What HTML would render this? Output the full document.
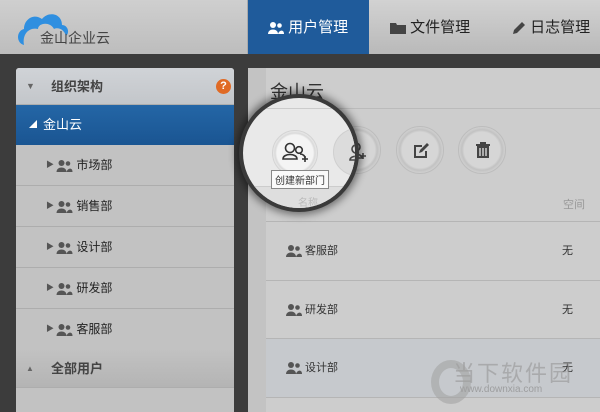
<!DOCTYPE html>
<html><head><meta charset="utf-8"><style>
*{margin:0;padding:0;box-sizing:border-box}
body{width:600px;height:412px;overflow:hidden;background:#3c3c3c;font-family:"Liberation Sans","Noto Sans CJK SC",sans-serif;position:relative}
.a{position:absolute}
.hdr{left:0;top:0;width:600px;height:54px;background:linear-gradient(#d2d2d2,#b9b9b9)}
.logo{left:0;top:0;width:248px;height:54px;background:linear-gradient(#cfcfcf,#bdbdbd);border-right:1px solid #aaa}
.tab{top:0;height:54px;line-height:56px;font-size:15px;color:#222}
.side{left:16px;top:68px;width:218px;height:344px;background:#c2c2c2;border-radius:3px 3px 0 0;overflow:hidden}
.row{position:absolute;left:0;width:218px;height:41px;border-bottom:1px solid #adadad;font-size:12px;color:#222;line-height:40px}
.ic{display:inline-block;vertical-align:middle}
.main{left:248px;top:68px;width:352px;height:344px;background:#cdcdcd;border-radius:3px 0 0 0}
.btn{width:48px;height:48px;border-radius:50%;background:radial-gradient(#d6d6d6 55%,#c2c2c2 62%,#cfcfcf 70%);border:1px solid #bdbdbd}
.tr{position:absolute;left:18px;width:334px;border-bottom:1px solid #b5b5b5;font-size:11px;color:#333}
</style></head><body>
<div class="a hdr"></div>
<div class="a logo">
<svg class="a" style="left:14px;top:7px" width="56" height="40" viewBox="0 0 56 40"><path d="M10 38 C2 36 2 24 10 22 C10 12 20 6 28 12 C34 4 48 6 48 18 C54 18 56 26 52 29 C50 22 44 20 40 22 C36 14 24 16 24 22 C16 20 8 26 10 38 Z" fill="#2f8fe0"/></svg>
<div class="a" style="left:40px;top:28px;font-size:14px;color:#444">金山企业云</div>
</div>
<div class="a tab" style="left:248px;width:121px;background:#1f5b9b;color:#fff;padding-left:20px">
<svg class="ic" width="16" height="12" viewBox="0 0 16 12"><circle cx="5" cy="3" r="3" fill="#fff"/><path d="M0 12 C0 6 10 6 10 12Z" fill="#fff"/><circle cx="11.5" cy="3.5" r="2.3" fill="#fff"/><path d="M10 12 C11 8 16 7 16 12Z" fill="#fff"/></svg> 用户管理</div>
<div class="a tab" style="left:390px"><svg class="ic" width="16" height="12"><path d="M0 1h6l1 2h9v9H0z" fill="#444"/></svg> 文件管理</div>
<div class="a tab" style="left:512px"><svg class="ic" width="14" height="14" viewBox="0 0 14 14"><path d="M1 13l1-4 8-8 3 3-8 8z" fill="#444"/></svg> 日志管理</div>

<div class="a side">
<div class="row" style="top:0;height:37px;background:linear-gradient(#d0d3d7,#c3c6ca);font-size:13px;line-height:37px;color:#444;font-weight:bold"><span style="position:absolute;left:10px;font-size:9px;color:#666">▼</span><span style="position:absolute;left:35px">组织架构</span><span style="position:absolute;left:200px;top:11px;width:15px;height:15px;border-radius:50%;background:#e06a25;color:#fff;font-size:11px;line-height:15px;text-align:center">?</span></div>
<div class="row" style="top:37px;height:40px;background:linear-gradient(#2466a6,#1a5592);color:#fff;border:0;font-size:13px"><span style="position:absolute;left:13px;font-size:8px">◢</span><span style="position:absolute;left:27px">金山云</span></div>
<div class="row" style="top:77px"><span style="position:absolute;left:30px;font-size:8px;color:#555">▶</span><span style="position:absolute;left:40px"><svg class="ic" width="17" height="12" viewBox="0 0 16 12"><circle cx="5" cy="3" r="3" fill="#555"/><path d="M0 12 C0 6 10 6 10 12Z" fill="#555"/><circle cx="11.5" cy="3.5" r="2.3" fill="#555"/><path d="M10 12 C11 8 16 7 16 12Z" fill="#555"/></svg> 市场部</span></div>
<div class="row" style="top:118px"><span style="position:absolute;left:30px;font-size:8px;color:#555">▶</span><span style="position:absolute;left:40px"><svg class="ic" width="17" height="12" viewBox="0 0 16 12"><circle cx="5" cy="3" r="3" fill="#555"/><path d="M0 12 C0 6 10 6 10 12Z" fill="#555"/><circle cx="11.5" cy="3.5" r="2.3" fill="#555"/><path d="M10 12 C11 8 16 7 16 12Z" fill="#555"/></svg> 销售部</span></div>
<div class="row" style="top:159px"><span style="position:absolute;left:30px;font-size:8px;color:#555">▶</span><span style="position:absolute;left:40px"><svg class="ic" width="17" height="12" viewBox="0 0 16 12"><circle cx="5" cy="3" r="3" fill="#555"/><path d="M0 12 C0 6 10 6 10 12Z" fill="#555"/><circle cx="11.5" cy="3.5" r="2.3" fill="#555"/><path d="M10 12 C11 8 16 7 16 12Z" fill="#555"/></svg> 设计部</span></div>
<div class="row" style="top:200px"><span style="position:absolute;left:30px;font-size:8px;color:#555">▶</span><span style="position:absolute;left:40px"><svg class="ic" width="17" height="12" viewBox="0 0 16 12"><circle cx="5" cy="3" r="3" fill="#555"/><path d="M0 12 C0 6 10 6 10 12Z" fill="#555"/><circle cx="11.5" cy="3.5" r="2.3" fill="#555"/><path d="M10 12 C11 8 16 7 16 12Z" fill="#555"/></svg> 研发部</span></div>
<div class="row" style="top:241px;border:0"><span style="position:absolute;left:30px;font-size:8px;color:#555">▶</span><span style="position:absolute;left:40px"><svg class="ic" width="17" height="12" viewBox="0 0 16 12"><circle cx="5" cy="3" r="3" fill="#555"/><path d="M0 12 C0 6 10 6 10 12Z" fill="#555"/><circle cx="11.5" cy="3.5" r="2.3" fill="#555"/><path d="M10 12 C11 8 16 7 16 12Z" fill="#555"/></svg> 客服部</span></div>
<div class="row" style="top:281px;height:39px;background:linear-gradient(#c2c2c2,#b4b4b4);font-size:13px;font-weight:bold;color:#444;line-height:39px"><span style="position:absolute;left:10px;font-size:8px;color:#666">▲</span><span style="position:absolute;left:35px">全部用户</span></div>
</div>

<div class="a main">
<div class="a" style="left:0;top:0;width:18px;height:344px;background:#c3c3c3"></div>
<div class="a" style="left:22px;top:10px;font-size:18px;color:#333">金山云</div>
<div class="a" style="left:18px;top:40px;width:334px;border-bottom:1px solid #bbb"></div>
<div class="tr" style="top:120px;height:34px;line-height:34px;color:#999"><span style="position:absolute;left:30px">名称</span><span style="position:absolute;left:297px">空间</span></div>
<div class="tr" style="top:154px;height:59px;line-height:59px"><span style="position:absolute;left:20px"><svg class="ic" width="16" height="12" viewBox="0 0 16 12"><circle cx="5" cy="3" r="3" fill="#555"/><path d="M0 12 C0 6 10 6 10 12Z" fill="#555"/><circle cx="11.5" cy="3.5" r="2.3" fill="#555"/><path d="M10 12 C11 8 16 7 16 12Z" fill="#555"/></svg> 客服部</span><span style="position:absolute;left:296px">无</span></div>
<div class="tr" style="top:213px;height:58px;line-height:58px"><span style="position:absolute;left:20px"><svg class="ic" width="16" height="12" viewBox="0 0 16 12"><circle cx="5" cy="3" r="3" fill="#555"/><path d="M0 12 C0 6 10 6 10 12Z" fill="#555"/><circle cx="11.5" cy="3.5" r="2.3" fill="#555"/><path d="M10 12 C11 8 16 7 16 12Z" fill="#555"/></svg> 研发部</span><span style="position:absolute;left:296px">无</span></div>
<div class="tr" style="top:271px;height:59px;line-height:59px;background:#c6c9cd"><span style="position:absolute;left:20px"><svg class="ic" width="16" height="12" viewBox="0 0 16 12"><circle cx="5" cy="3" r="3" fill="#555"/><path d="M0 12 C0 6 10 6 10 12Z" fill="#555"/><circle cx="11.5" cy="3.5" r="2.3" fill="#555"/><path d="M10 12 C11 8 16 7 16 12Z" fill="#555"/></svg> 设计部</span><span style="position:absolute;left:296px">无</span></div>
<div class="a" style="left:205px;top:288px;font-size:22px;color:rgba(150,150,150,.6);letter-spacing:2px">当下软件园</div>
<div class="a" style="left:212px;top:316px;font-size:10px;color:rgba(140,140,140,.7)">www.downxia.com</div>
<div class="a" style="left:183px;top:292px;width:40px;height:44px;border-radius:50%;border:8px solid rgba(160,160,160,.55)"></div>
<div class="a btn" style="left:85px;top:58px"><svg class="a" style="left:14px;top:14px" width="20" height="20" viewBox="0 0 20 20" fill="none" stroke="#444" stroke-width="1.6"><circle cx="8" cy="6" r="4"/><path d="M2 17c0-5 12-5 12 0z"/><path d="M15 12v6M12 15h6"/></svg></div>
<div class="a btn" style="left:148px;top:58px"><svg class="a" style="left:15px;top:15px" width="18" height="18" viewBox="0 0 18 18"><path d="M2 3h8v2H4v9h9V9h2v7H2z" fill="#444"/><path d="M7 11l1-3 7-7 2 2-7 7z" fill="#444"/></svg></div>
<div class="a btn" style="left:210px;top:58px"><svg class="a" style="left:16px;top:14px" width="16" height="18" viewBox="0 0 16 18"><path d="M1 3h14v2H1zM5 1h6v2H5zM2 5h12v12H2z" fill="#444"/><path d="M5 7v8M8 7v8M11 7v8" stroke="#cfcfcf" stroke-width="1.5"/></svg></div>
</div>

<div class="a" style="left:239px;top:94px;width:120px;height:118px;border-radius:50%;background:#e9e9e9;border:4px solid #3a3a3a;box-shadow:0 0 8px 3px rgba(0,0,0,.45);overflow:hidden">
<div class="a" style="left:0;top:10px;width:130px;border-bottom:1px solid #ccc"></div>
<div class="a" style="left:0;top:88px;width:130px;height:40px;border-top:1px solid #ccc;background:#dedede"></div>
<div class="a" style="left:29px;top:32px;width:46px;height:46px;border-radius:50%;background:radial-gradient(#f4f4f4 58%,#dadada 64%,#ececec 72%);border:1px solid #d4d4d4"><svg class="a" style="left:9px;top:11px" width="28" height="22" viewBox="0 0 28 22" fill="none" stroke="#333" stroke-width="1.6"><circle cx="8" cy="6" r="4.5"/><path d="M1 17c0-6 14-6 14 0z"/><circle cx="17" cy="8" r="3.3"/><path d="M18 12c3 0 5 2 5 4"/><path d="M23 14v6M20 17h6"/></svg></div>
<div class="a" style="left:90px;top:30px;width:48px;height:48px;border-radius:50%;background:#dcdcdc;border:1px solid #cfcfcf"><svg class="a" style="left:14px;top:14px" width="20" height="20" viewBox="0 0 20 20" fill="none" stroke="#444" stroke-width="1.6"><circle cx="8" cy="6" r="4"/><path d="M2 17c0-5 12-5 12 0z"/><path d="M15 12v6M12 15h6"/></svg></div>
<div class="a" style="left:28px;top:72px;padding:1px 3px;background:#fafafa;border:1px solid #888;font-size:10px;color:#333;white-space:nowrap">创建新部门</div>
<div class="a" style="left:55px;top:96px;font-size:10px;color:#bbb">名称</div>
</div>
</body></html>
